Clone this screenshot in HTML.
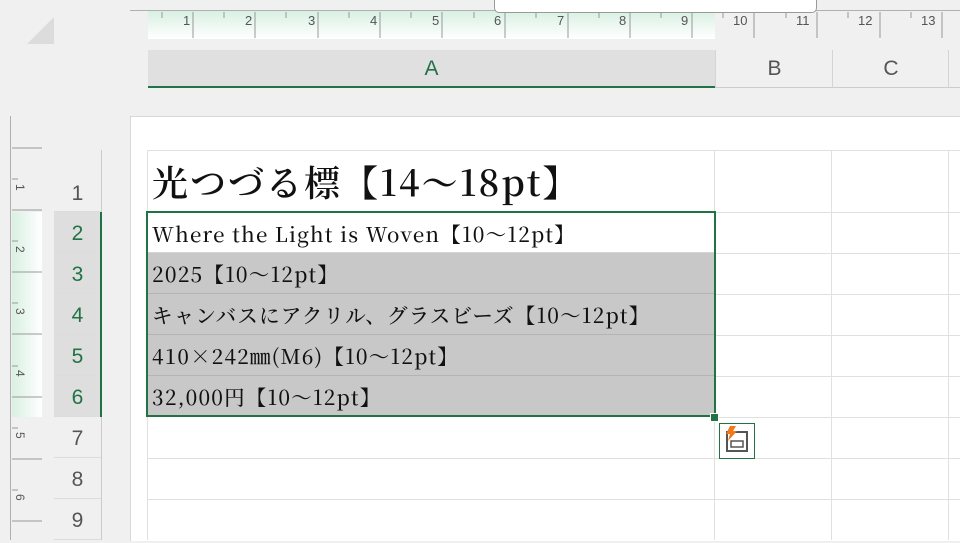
<!DOCTYPE html><html><head><meta charset="utf-8"><style>
body{margin:0;width:960px;height:540px;overflow:hidden;background:#f0f0f0;position:relative;font-family:"Liberation Sans",sans-serif}
.a{position:absolute}
.serif{font-family:"Noto Serif CJK JP","Noto Serif CJK SC","Liberation Serif",serif;color:#111;white-space:nowrap}
.rn{position:absolute;left:54px;width:47px;text-align:center;font-size:21px;color:#555;border-bottom:1px solid #dcdcdc;box-sizing:border-box}
.rs{background:#dedede;color:#217346}
.cell{position:absolute;left:148px;width:567px;box-sizing:border-box;border-bottom:1px solid #d4d4d4;font-size:20.5px;letter-spacing:1.2px;padding-left:4px;font-weight:500;overflow:hidden}
.g{background:#c8c8c8;border-bottom:1px solid #b4b4b4}
</style></head><body>
<div class="a" style="left:27px;top:17px;width:0;height:0;border-left:27px solid transparent;border-bottom:27px solid #dcdcdc"></div>
<div class="a" style="left:130px;top:10px;width:830px;height:1px;background:#b0b0b0"></div>
<div class="a" style="left:148px;top:11px;width:567px;height:28px;background:linear-gradient(#d9f0e2,#ffffff)"></div>
<svg class="a" style="left:0;top:0" width="960" height="40">
<g stroke="#999" stroke-width="1">
<path d="M193 12V38M255 12V38M318 12V38M380 12V38M442 12V38M505 12V38M568 12V38M630 12V38M692 12V38M754 12V38M817 12V38M880 12V38M942 12V38"/>
<path d="M162 12V18M224 12V18M286 12V18M349 12V18M411 12V18M474 12V18M536 12V18M599 12V18M661 12V18M723 12V18M786 12V18M848 12V18M911 12V18"/>
</g>
<g font-family="Liberation Sans" font-size="13" fill="#555">
<text x="183" y="25">1</text><text x="245" y="25">2</text><text x="308" y="25">3</text><text x="370" y="25">4</text><text x="432" y="25">5</text><text x="494" y="25">6</text><text x="557" y="25">7</text><text x="619" y="25">8</text><text x="681" y="25">9</text><text x="733" y="25">10</text><text x="796" y="25">11</text><text x="858" y="25">12</text><text x="921" y="25">13</text>
</g></svg>
<div class="a" style="left:494px;top:-2px;width:321px;height:13px;background:#fff;border:1px solid #999;border-radius:0 0 5px 5px"></div>
<div class="a" style="left:148px;top:50px;width:567px;height:36px;background:#e0e0e0;border-bottom:2px solid #217346;text-align:center;font-size:21px;line-height:37px;color:#217346">A</div>
<div class="a" style="left:715px;top:50px;width:117px;height:37px;border-left:1px solid #d4d4d4;border-bottom:1px solid #ccc;text-align:center;font-size:21px;line-height:37px;color:#555">B</div>
<div class="a" style="left:832px;top:50px;width:116px;height:37px;border-left:1px solid #d4d4d4;border-bottom:1px solid #ccc;text-align:center;font-size:21px;line-height:37px;color:#555">C</div>
<div class="a" style="left:948px;top:50px;width:12px;height:37px;border-left:1px solid #d4d4d4;border-bottom:1px solid #ccc"></div>
<div class="a" style="left:10px;top:116px;width:1px;height:424px;background:#b0b0b0"></div>
<div class="a" style="left:12px;top:212px;width:30px;height:205px;background:linear-gradient(90deg,#d9f0e2,#ffffff)"></div>
<svg class="a" style="left:0;top:110px" width="50" height="430">
<g stroke="#999"><path d="M12 38H42M12 100H42M12 162H42M12 224H42M12 287H42M12 349H42M12 411H42M12 69H18M12 131H18M12 193H18M12 256H18M12 318H18M12 380H18"/></g>
<g font-family="Liberation Sans" font-size="12" fill="#555">
<text transform="translate(16,74) rotate(90)">1</text><text transform="translate(16,136) rotate(90)">2</text><text transform="translate(16,198) rotate(90)">3</text><text transform="translate(16,260) rotate(90)">4</text><text transform="translate(16,322) rotate(90)">5</text><text transform="translate(16,384) rotate(90)">6</text>
</g></svg>
<div class="a" style="left:101px;top:150px;width:1px;height:390px;background:#ccc"></div>
<div class="rn" style="top:150px;height:62px;line-height:88px">1</div>
<div class="rn rs" style="top:212px;height:41px;line-height:44px">2</div>
<div class="rn rs" style="top:253px;height:41px;line-height:44px">3</div>
<div class="rn rs" style="top:294px;height:41px;line-height:44px">4</div>
<div class="rn rs" style="top:335px;height:41px;line-height:44px">5</div>
<div class="rn rs" style="top:376px;height:41px;line-height:44px">6</div>
<div class="rn" style="top:417px;height:41px;line-height:44px">7</div>
<div class="rn" style="top:458px;height:41px;line-height:44px">8</div>
<div class="rn" style="top:499px;height:41px;line-height:44px">9</div>
<div class="a" style="left:100px;top:212px;width:2px;height:205px;background:#217346"></div>
<div class="a" style="left:130px;top:116px;width:830px;height:424px;background:#fff;border-top:1px solid #d8d8d8;border-left:1px solid #d8d8d8"></div>
<div class="a" style="left:148px;top:150px;width:812px;height:1px;background:#e0e0e0"></div>
<div class="a" style="left:147px;top:150px;width:1px;height:390px;background:#e0e0e0"></div>
<div class="a" style="left:714px;top:150px;width:1px;height:390px;background:#e0e0e0"></div>
<div class="a" style="left:831px;top:150px;width:1px;height:390px;background:#e0e0e0"></div>
<div class="a" style="left:948px;top:150px;width:1px;height:390px;background:#e0e0e0"></div>
<svg class="a" style="left:715px;top:150px" width="245" height="390"><g stroke="#e0e0e0"><path d="M0 62.5H245M0 103.5H245M0 144.5H245M0 185.5H245M0 226.5H245M0 267.5H245M0 308.5H245M0 349.5H245"/></g></svg>
<svg class="a" style="left:148px;top:417px" width="567" height="123"><g stroke="#e0e0e0"><path d="M0 41.5H567M0 82.5H567"/></g></svg>
<div class="cell serif" style="top:150px;height:62px;font-size:36px;letter-spacing:2px;line-height:64px;border:none;font-weight:600">光つづる標【14〜18pt】</div>
<div class="cell serif" style="top:212px;height:41px;line-height:42px">Where the Light is Woven【10〜12pt】</div>
<div class="cell serif g" style="top:253px;height:41px;line-height:40px">2025【10〜12pt】</div>
<div class="cell serif g" style="top:294px;height:41px;line-height:40px">キャンバスにアクリル、グラスビーズ【10〜12pt】</div>
<div class="cell serif g" style="top:335px;height:41px;line-height:40px">410×242㎜(M6)【10〜12pt】</div>
<div class="cell serif g" style="top:376px;height:41px;line-height:40px">32,000円【10〜12pt】</div>
<div class="a" style="left:146px;top:211px;width:566px;height:202px;border:2px solid #217346"></div>
<div class="a" style="left:710px;top:413px;width:7px;height:7px;background:#217346;border:1px solid #fff"></div>
<div class="a" style="left:719px;top:423px;width:34px;height:34px;border:1px solid #217346;background:#fff"></div>
<svg class="a" style="left:720px;top:424px" width="34" height="34">
<rect x="7" y="8" width="20" height="19" fill="none" stroke="#555" stroke-width="2"/>
<rect x="11" y="17" width="12" height="6" fill="none" stroke="#555" stroke-width="1.5"/>
<path d="M10 2L16 2L13 7L17 7L8 17L10 10L6 10Z" fill="#f07a1a"/>
</svg>
</body></html>
